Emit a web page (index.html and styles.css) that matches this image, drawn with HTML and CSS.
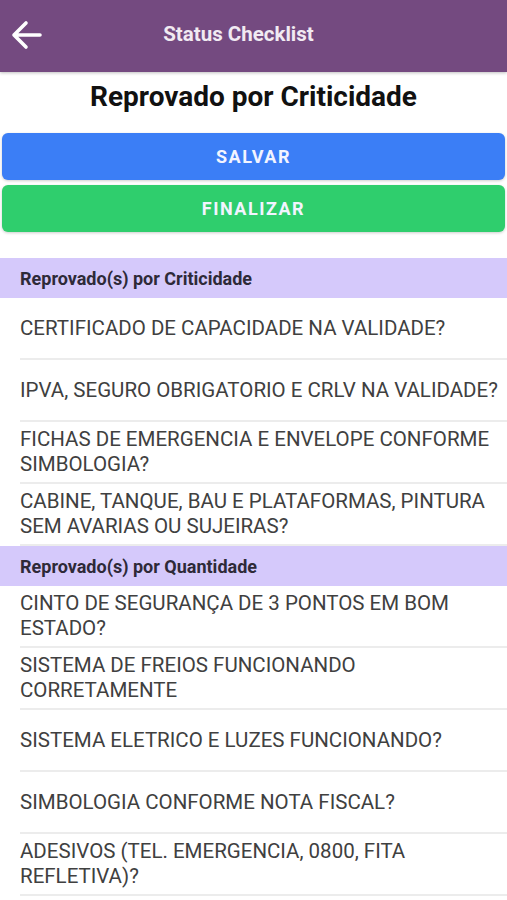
FILE: index.html
```html
<!DOCTYPE html>
<html lang="pt">
<head>
    <meta charset="UTF-8">
    <meta name="viewport" content="width=device-width, initial-scale=1.0">
    <title>Status Checklist</title>
    <link rel="stylesheet" href="styles.css">
</head>
<body>
    <header class="app-bar">
        <button class="back-button" aria-label="Voltar">
            <svg width="32" height="30" viewBox="0 0 32 30">
                <path d="M3 15H29M3 15L15 3M3 15L15 27" fill="none" stroke="#fff" stroke-width="3.6" stroke-linecap="round" stroke-linejoin="round"/>
            </svg>
        </button>
        <div class="app-title">Status Checklist</div>
        <div class="app-spacer"></div>
    </header>

    <h1 class="page-title">Reprovado por Criticidade</h1>

    <div class="actions">
        <button class="action-button save">SALVAR</button>
        <button class="action-button finish">FINALIZAR</button>
    </div>

    <div class="section-header">Reprovado(s) por Criticidade</div>
    <ul class="item-list">
        <li class="item">CERTIFICADO DE CAPACIDADE NA VALIDADE?</li>
        <li class="item">IPVA, SEGURO OBRIGATORIO E CRLV NA VALIDADE?</li>
        <li class="item">FICHAS DE EMERGENCIA E ENVELOPE CONFORME SIMBOLOGIA?</li>
        <li class="item">CABINE, TANQUE, BAU E PLATAFORMAS, PINTURA SEM AVARIAS OU SUJEIRAS?</li>
    </ul>

    <div class="section-header">Reprovado(s) por Quantidade</div>
    <ul class="item-list">
        <li class="item">CINTO DE SEGURANÇA DE 3 PONTOS EM BOM ESTADO?</li>
        <li class="item">SISTEMA DE FREIOS FUNCIONANDO CORRETAMENTE</li>
        <li class="item">SISTEMA ELETRICO E LUZES FUNCIONANDO?</li>
        <li class="item">SIMBOLOGIA CONFORME NOTA FISCAL?</li>
        <li class="item">ADESIVOS (TEL. EMERGENCIA, 0800, FITA REFLETIVA)?</li>
    </ul>
</body>
</html>
```

FILE: styles.css
```css
body {
    margin: 0;
    font-family: Roboto, "Liberation Sans", sans-serif;
    background: #fff;
    overflow: hidden;
}

.app-bar {
    display: flex;
    align-items: center;
    height: 72px;
    background: #744a80;
    box-shadow: 0 1px 3px rgba(0, 0, 0, 0.25);
}

.back-button {
    display: flex;
    align-items: center;
    justify-content: center;
    width: 50px;
    height: 72px;
    padding: 0 0 2px 4px;
    margin: 0;
    border: none;
    background: transparent;
}

.app-title {
    flex: 1;
    text-align: center;
    color: #f1eaf2;
    font-size: 20.5px;
    font-weight: 700;
    padding-bottom: 4px;
}

.app-spacer {
    width: 80px;
}

.page-title {
    margin: 0;
    padding: 9px 0 20px;
    text-align: center;
    font-size: 28px;
    line-height: 32px;
    font-weight: 700;
    color: #111;
}

.actions {
    display: flex;
    flex-direction: column;
    gap: 5px;
    padding: 0 2px;
    margin-bottom: 26px;
}

.action-button {
    height: 47px;
    border: none;
    border-radius: 6px;
    color: #f2f4ff;
    font-family: inherit;
    font-size: 18px;
    font-weight: 700;
    letter-spacing: 1.5px;
    box-shadow: 0 1px 3px rgba(0, 0, 0, 0.2);
}

.save { background: #3b7ef6; }
.finish { background: #2fce6d; }

.section-header {
    display: flex;
    align-items: center;
    height: 40px;
    padding-left: 20px;
    background: #d5c9fb;
    color: #2e2a38;
    font-size: 18px;
    font-weight: 700;
}

.item-list {
    list-style: none;
    margin: 0;
    padding: 0;
}

.item {
    display: flex;
    align-items: center;
    min-height: 50px;
    margin-left: 20px;
    padding: 5px 4px 5px 0;
    border-bottom: 2px solid #ececec;
    color: #404040;
    font-size: 20.5px;
    line-height: 25px;
}
```
